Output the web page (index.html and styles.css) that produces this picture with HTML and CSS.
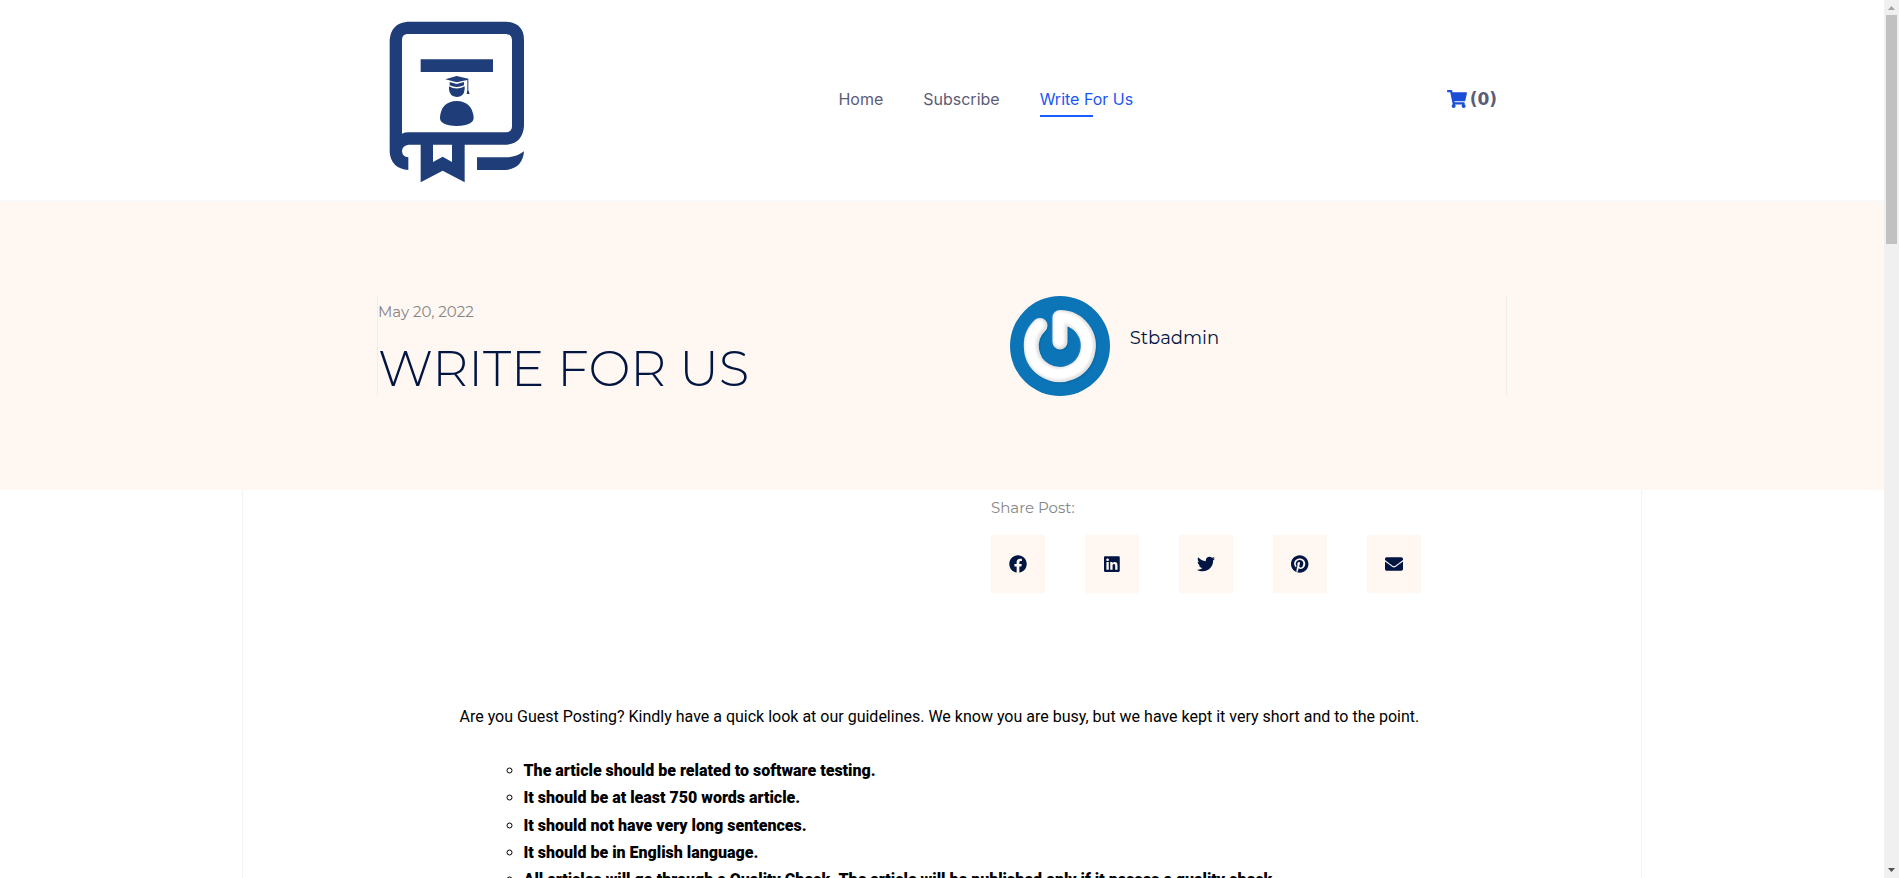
FILE: index.html
```html
<!DOCTYPE html>
<html lang="en">
<head>
<meta charset="utf-8">
<meta name="viewport" content="width=device-width, initial-scale=1">
<title>Write For Us</title>
<link rel="stylesheet" href="styles.css">
</head>
<body>
<div class="window">
  <div class="page">
    <header class="site-header">
      <div class="header-inner">
        <a class="logo" href="#" aria-label="Home page">
          <svg viewBox="87 63 408 486" width="136" height="162" fill="#1f3e79" aria-hidden="true">
            <path fill-rule="evenodd" d="M142 65H440Q492 70 492 120V378Q488 430 440 434H314V547L248 512L182 547V434H146Q127 436 126 453Q127 470 145 472V510Q93 506 89 456V120Q93 70 142 65ZM142 102Q127 103 126 118V401Q134 397 146 397H438Q454 396 456 380V120Q455 103 438 102ZM219 434V486L248 470L276 486V434Z"/>
            <path d="M182 178H399V216H182ZM351 472H446Q470 470 492 454Q488 505 438 510H351Z"/>
            <path d="M256 238L290 228L325 236V270L329 282H320L322 270V240L290 247ZM269 246L290 252L312 246V256Q290 266 269 256ZM267 259Q290 272 314 259V268Q312 291 290 291Q268 289 267 268ZM240 352Q244 304 290 303Q336 304 341 352Q342 377 290 378Q238 377 240 352Z"/>
          </svg>
        </a>
        <nav class="main-nav">
          <a href="#">Home</a>
          <a href="#">Subscribe</a>
          <a class="active" href="#">Write For Us</a>
        </nav>
        <a class="cart" href="#" aria-label="Cart, 0 items">
          <svg viewBox="0 0 576 512" width="20" height="18" fill="#1a4fd6" aria-hidden="true"><path d="M528.12 301.319l47.273-208C578.806 78.301 567.391 64 551.99 64H159.208l-9.166-44.81C147.758 8.021 137.93 0 126.529 0H24C10.745 0 0 10.745 0 24v16c0 13.255 10.745 24 24 24h69.883l70.248 343.435C147.325 417.1 136 435.222 136 456c0 30.928 25.072 56 56 56s56-25.072 56-56c0-15.674-6.447-29.835-16.824-40h209.647C430.447 426.165 424 440.326 424 456c0 30.928 25.072 56 56 56s56-25.072 56-56c0-22.172-12.888-41.332-31.579-50.405l5.517-24.276c3.413-15.018-8.002-29.319-23.403-29.319H218.117l-6.545-32h293.145c11.206 0 20.92-7.754 23.403-18.681z"/></svg>
          <span>(0)</span>
        </a>
      </div>
    </header>

    <section class="hero">
      <div class="hero-inner">
        <div class="heading">
          <time class="date" datetime="2022-05-20">May 20, 2022</time>
          <h1>WRITE FOR US</h1>
        </div>
        <div class="author">
          <svg viewBox="0 0 100 100" width="100" height="100" role="img" aria-label="Author avatar">
            <defs>
              <filter id="bevel" x="-10%" y="-10%" width="125%" height="125%">
                <feGaussianBlur stdDeviation="1"/>
              </filter>
            </defs>
            <circle cx="50" cy="50" r="50" fill="#0c75b8"/>
            <g fill="none" stroke-linecap="round" stroke-linejoin="round">
              <path d="M50 46V21.500A28.500 28.500 0 1 1 30 29.500" stroke="#0a5f98" stroke-width="14" filter="url(#bevel)" transform="translate(1 1)"/>
              <path d="M50 46V21.500A28.500 28.500 0 1 1 30 29.500" stroke="#e2e2e2" stroke-width="15"/>
              <path d="M49 45V21A28.500 28.500 0 1 1 29 29" stroke="#fff" stroke-width="11" filter="url(#bevel)"/>
            </g>
          </svg>
          <span class="author-name">Stbadmin</span>
        </div>
      </div>
    </section>

    <main class="content">
      <section class="share">
        <h2>Share Post:</h2>
        <div class="share-buttons">
          <button type="button" aria-label="Share on Facebook"><svg viewBox="0 0 512 512" aria-hidden="true"><path d="M504 256C504 119 393 8 256 8S8 119 8 256c0 123.78 90.69 226.38 209.25 245V327.69h-63V256h63v-54.64c0-62.15 37-96.48 93.67-96.48 27.14 0 55.52 4.84 55.52 4.84v61h-31.28c-30.8 0-40.41 19.12-40.41 38.73V256h68.78l-11 71.69h-57.78V501C413.31 482.38 504 379.78 504 256z"/></svg></button>
          <button type="button" aria-label="Share on LinkedIn"><svg viewBox="0 0 448 512" aria-hidden="true"><path d="M416 32H31.9C14.3 32 0 46.5 0 64.3v383.4C0 465.5 14.3 480 31.9 480H416c17.6 0 32-14.5 32-32.3V64.3c0-17.8-14.4-32.3-32-32.3zM135.4 416H69V202.2h66.5V416zm-33.2-243c-21.3 0-38.5-17.3-38.5-38.5S80.9 96 102.2 96c21.2 0 38.5 17.3 38.5 38.5 0 21.3-17.2 38.5-38.5 38.5zm282.1 243h-66.4V312c0-24.8-.5-56.7-34.5-56.7-34.6 0-39.9 27-39.9 54.9V416h-66.4V202.2h63.7v29.2h.9c8.9-16.8 30.6-34.5 62.9-34.5 67.2 0 79.7 44.3 79.7 101.9V416z"/></svg></button>
          <button type="button" aria-label="Share on Twitter"><svg viewBox="0 0 512 512" aria-hidden="true"><path d="M459.37 151.716c.325 4.548.325 9.097.325 13.645 0 138.72-105.583 298.558-298.558 298.558-59.452 0-114.68-17.219-161.137-47.106 8.447.974 16.568 1.299 25.34 1.299 49.055 0 94.213-16.568 130.274-44.832-46.132-.975-84.792-31.188-98.112-72.772 6.498.974 12.995 1.624 19.818 1.624 9.421 0 18.843-1.3 27.614-3.573-48.081-9.747-84.143-51.98-84.143-102.985v-1.299c13.969 7.797 30.214 12.67 47.431 13.319-28.264-18.843-46.781-51.005-46.781-87.391 0-19.492 5.197-37.36 14.294-52.954 51.655 63.675 129.3 105.258 216.365 109.807-1.624-7.797-2.599-15.918-2.599-24.04 0-57.828 46.782-104.934 104.934-104.934 30.213 0 57.502 12.67 76.67 33.137 23.715-4.548 46.456-13.32 66.599-25.34-7.798 24.366-24.366 44.833-46.132 57.827 21.117-2.273 41.584-8.122 60.426-16.243-14.292 20.791-32.161 39.308-52.628 54.253z"/></svg></button>
          <button type="button" aria-label="Share on Pinterest"><svg viewBox="0 0 496 512" aria-hidden="true"><path d="M496 256c0 137-111 248-248 248-25.6 0-50.2-3.9-73.4-11.1 10.1-16.5 25.2-43.5 30.8-65 3-11.6 15.4-59 15.4-59 8.1 15.4 31.7 28.5 56.8 28.5 74.8 0 128.7-68.8 128.7-154.3 0-81.9-66.9-143.2-152.9-143.2-107 0-163.9 71.8-163.9 150.1 0 36.4 19.4 81.7 50.3 96.1 4.7 2.2 7.2 1.2 8.3-3.3.8-3.4 5-20.3 6.9-28.1.6-2.5.3-4.7-1.7-7.1-10.1-12.5-18.3-35.3-18.3-56.6 0-54.7 41.4-107.6 112-107.6 60.9 0 103.6 41.5 103.6 100.9 0 67.1-33.9 113.6-78 113.6-24.3 0-42.6-20.1-36.7-44.8 7-29.5 20.5-61.3 20.5-82.6 0-19-10.2-34.9-31.4-34.9-24.9 0-44.9 25.7-44.9 60.2 0 22 7.4 36.8 7.4 36.8s-24.5 103.8-29 123.2c-5 21.4-3 51.6-.9 71.2C65.4 450.9 0 361.1 0 256 0 119 111 8 248 8s248 111 248 248z"/></svg></button>
          <button type="button" aria-label="Share by email"><svg viewBox="0 0 512 512" aria-hidden="true"><path d="M502.3 190.8c3.9-3.1 9.7-.2 9.7 4.7V400c0 26.5-21.5 48-48 48H48c-26.5 0-48-21.5-48-48V195.6c0-5 5.7-7.8 9.7-4.7 22.4 17.4 52.1 39.5 154.1 113.6 21.1 15.4 56.7 47.8 92.2 47.6 35.7.3 72-32.8 92.3-47.6 102-74.1 131.6-96.3 154-113.7zM256 320c23.2.4 56.6-29.2 73.4-41.4 132.7-96.3 142.8-104.7 173.4-128.7 5.8-4.5 9.2-11.5 9.2-18.9v-19c0-26.5-21.5-48-48-48H48c-26.5 0-48 21.5-48 48v19c0 7.4 3.4 14.3 9.2 18.9 30.6 23.9 40.7 32.4 173.4 128.7 16.8 12.2 50.2 41.8 73.4 41.4z"/></svg></button>
        </div>
      </section>
      <article class="article">
        <p>Are you Guest Posting? Kindly have a quick look at our guidelines. We know you are busy, but we have kept it very short and to the point.</p>
        <ul>
          <li>The article should be related to software testing.</li>
          <li>It should be at least 750 words article.</li>
          <li>It should not have very long sentences.</li>
          <li>It should be in English language.</li>
          <li>All articles will go through a Quality Check. The article will be published only if it passes a quality check.</li>
        </ul>
      </article>
    </main>
  </div>
  <div class="scrollbar" aria-hidden="true">
    <svg viewBox="0 0 15 15" width="15" height="15"><path d="M4 10L7.500 6L11 10Z" fill="#a3a3a3"/></svg>
    <div class="track"><div class="thumb"></div></div>
    <svg viewBox="0 0 15 15" width="15" height="15"><path d="M4 5L7.500 9L11 5Z" fill="#505050"/></svg>
  </div>
</div>
</body>
</html>
```
FILE: styles.css
```css
* {
  box-sizing: border-box;
}

body {
  margin: 0;
  background: #fff;
  color: #000;
  font-family: Roboto, "Liberation Sans", sans-serif;
  font-size: 16px;
  line-height: 1.7;
}

a {
  color: inherit;
  text-decoration: none;
}

.window {
  display: grid;
  grid-template-columns: minmax(0, 1fr) 15px;
  height: 100vh;
}

.page {
  display: flex;
  flex-direction: column;
  overflow: hidden;
}

/* Header */
.site-header {
  flex: none;
  border-bottom: 2px solid #f8f8f8;
}

.header-inner {
  display: flex;
  align-items: center;
  justify-content: space-between;
  max-width: 1130px;
  margin: 0 auto;
  padding: 15px 10px 17px 12px;
}

.logo {
  padding-top: 6px;
}

.logo svg {
  display: block;
}

.main-nav {
  display: flex;
  gap: 40px;
  color: #5c5c77;
  font-family: Inter, sans-serif;
  line-height: 20px;
}

.main-nav a {
  padding: 8px 0;
}

.main-nav .active {
  color: #1a56f5;
  background: linear-gradient(#1a5cff, #1a5cff) left bottom / 53px 2px no-repeat;
}

.cart {
  display: flex;
  align-items: center;
  gap: 3px;
  color: #5c5c77;
  font-family: "DejaVu Sans", sans-serif;
  font-size: 17px;
  font-weight: 700;
}

/* Hero */
.hero {
  flex: none;
  padding: 94px 0;
  background: #fff7f2;
}

.hero-inner {
  display: grid;
  grid-template-columns: 56% 1fr;
  max-width: 1130px;
  margin: 0 auto;
  border: solid #f9ebe8;
  border-width: 0 1px;
}

.heading {
  display: flex;
  flex-direction: column;
  color: #001542;
  font-family: Montserrat, Inter, sans-serif;
}

.date {
  padding-top: 4px;
  color: #868686;
  font-size: 15px;
  font-weight: 400;
  line-height: 24px;
}

.heading h1 {
  margin: 18px 0 0;
  font-size: 50px;
  font-weight: 300;
  line-height: 54px;
}

.author {
  display: flex;
  gap: 20px;
  color: #001542;
}

.author-name {
  padding-top: 27px;
  font-family: Montserrat, Inter, sans-serif;
  font-size: 18px;
  font-weight: 400;
}

/* Content */
.content {
  flex: 1 0 auto;
  width: 100%;
  max-width: 1400px;
  margin: 0 auto;
  border: solid #f3f3f5;
  border-width: 0 1px;
}

.share {
  margin-left: 50%;
  padding: 6px 0 0 49px;
}

.share h2 {
  margin: 0 0 15px;
  color: #868686;
  font-family: Montserrat, Inter, sans-serif;
  font-size: 15px;
  font-weight: 400;
  line-height: 24px;
}

.share-buttons {
  display: flex;
  gap: 40px;
}

.share-buttons button {
  display: flex;
  align-items: center;
  justify-content: center;
  width: 54px;
  height: 58px;
  padding: 0;
  border: 0;
  background: #fff7f2;
}

.share-buttons svg {
  height: 18px;
  fill: #001542;
}

.article {
  max-width: 965px;
  margin: 0 auto;
  padding-top: 110px;
}

.article p {
  margin: 0 0 27px;
}

.article ul {
  margin: 0;
  padding-left: 64px;
  list-style: circle;
  font-weight: 900;
}

/* Scrollbar */
.scrollbar {
  display: flex;
  flex-direction: column;
  background: #f0f0f0;
}

.track {
  flex: 1;
  padding: 0 2px;
}

.thumb {
  height: 27%;
  background: #c1c1c1;
}
```
